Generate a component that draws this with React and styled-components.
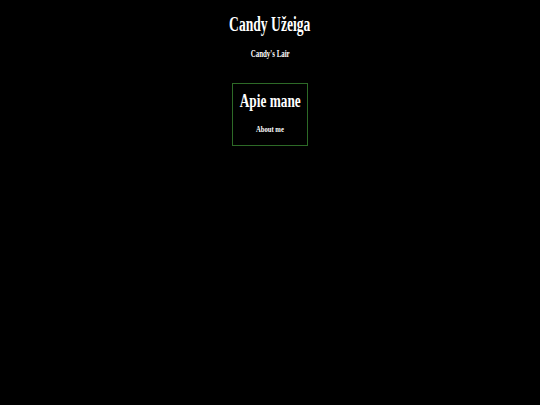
import React from 'react';
import styled, { createGlobalStyle } from 'styled-components';

const GlobalStyle = createGlobalStyle`
  html, body {
    margin: 0;
    padding: 0;
    background: #000;
    height: 100%;
  }
  #root {
    min-height: 100%;
  }
`;

const Page = styled.div`
  min-height: 405px;
  background: #000;
  color: #fff;
  font-family: 'Liberation Serif', 'Times New Roman', serif;
  display: flex;
  flex-direction: column;
  align-items: center;
  padding-top: 12px;
`;

const Title = styled.h1`
  margin: 0;
  font-size: 20px;
  font-weight: bold;
  line-height: 24px;
  transform: scaleX(0.68);
`;

const Subtitle = styled.p`
  margin: 12px 0 0;
  font-size: 10px;
  font-weight: bold;
  line-height: 12px;
  transform: scaleX(0.69);
`;

const Card = styled.section`
  margin-top: 23px;
  width: 76px;
  height: 63px;
  box-sizing: border-box;
  border: 1px solid #2d6a27;
  display: flex;
  flex-direction: column;
  align-items: center;
  padding-top: 6px;
`;

const CardTitle = styled.h2`
  margin: 0;
  font-size: 18px;
  font-weight: bold;
  line-height: 22px;
  white-space: nowrap;
  transform: scaleX(0.74);
`;

const CardSub = styled.p`
  margin: 12px 0 0;
  font-size: 9px;
  font-weight: bold;
  line-height: 11px;
  white-space: nowrap;
  transform: scaleX(0.74);
`;

export default function App() {
  return (
    <>
      <GlobalStyle />
      <Page>
        <Title>Candy Užeiga</Title>
        <Subtitle>Candy's Lair</Subtitle>
        <Card>
          <CardTitle>Apie mane</CardTitle>
          <CardSub>About me</CardSub>
        </Card>
      </Page>
    </>
  );
}
